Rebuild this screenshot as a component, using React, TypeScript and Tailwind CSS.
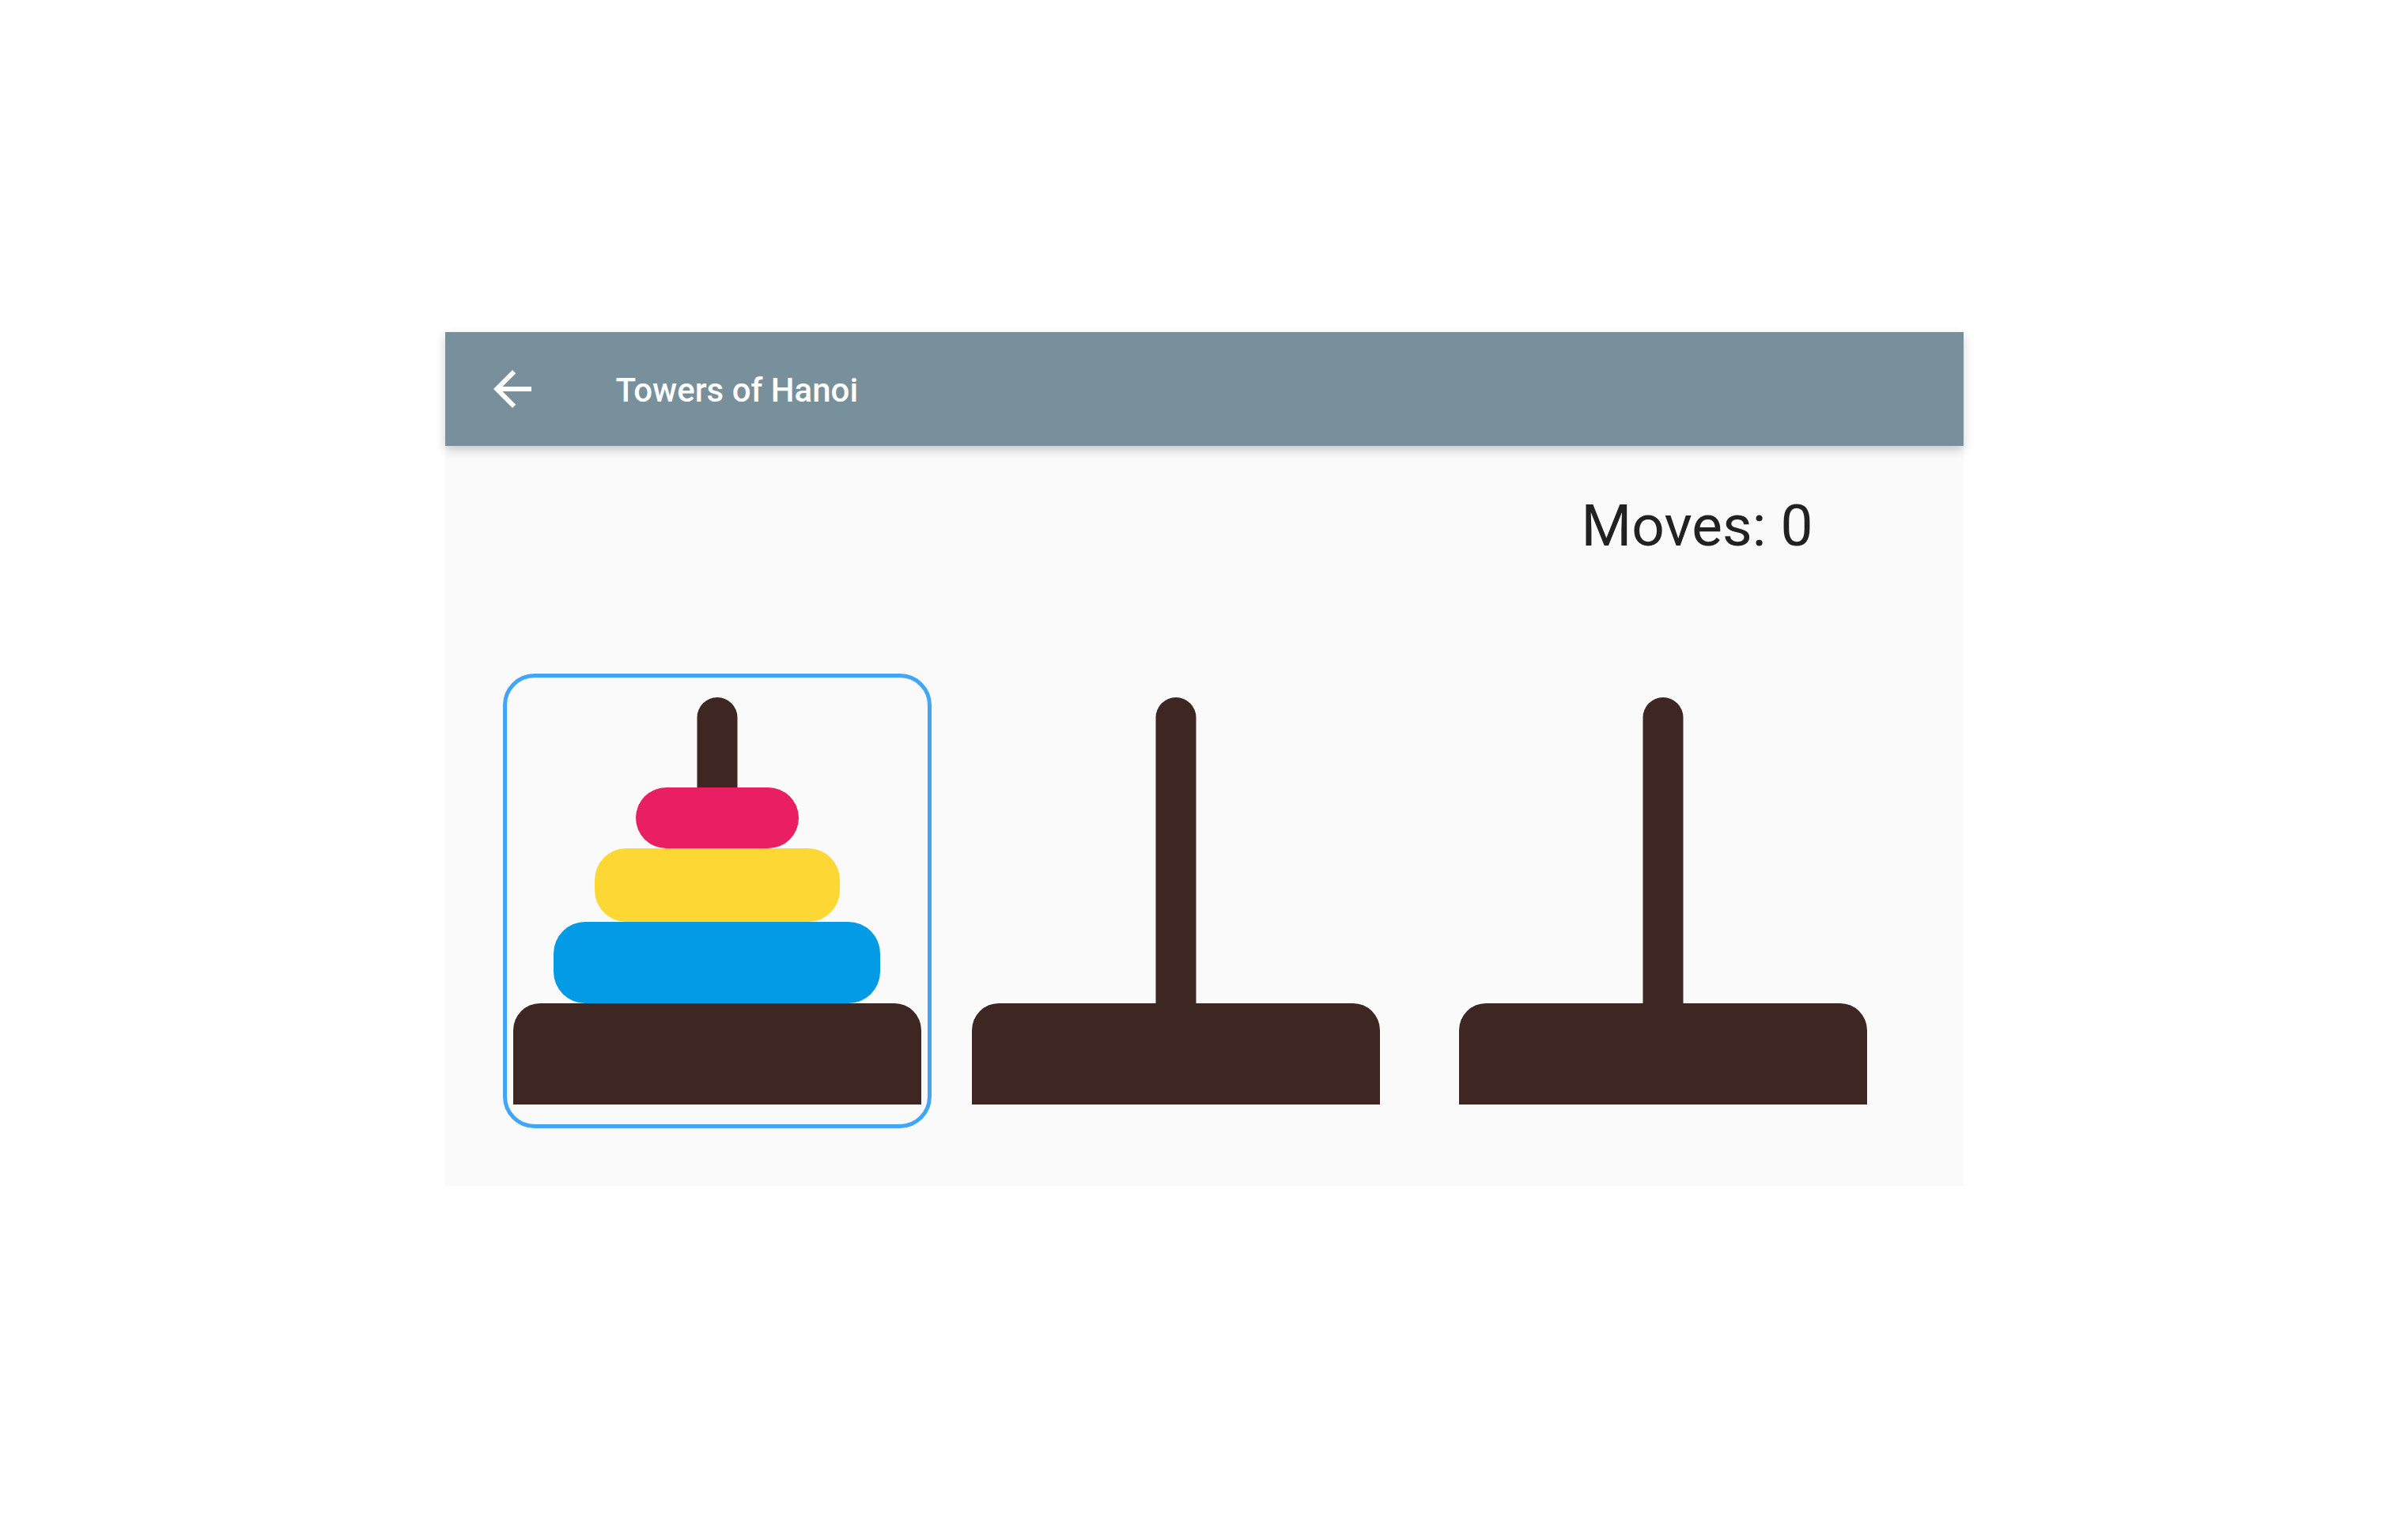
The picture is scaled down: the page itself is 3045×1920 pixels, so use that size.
import React from 'react';

type Disk = { width: number; height: number; color: string };

const disks: Disk[][] = [
  [
    { width: 206, height: 77, color: 'bg-[#e91e63]' },
    { width: 310, height: 93, color: 'bg-[#fdd835]' },
    { width: 413, height: 103, color: 'bg-[#039be5]' },
  ],
  [],
  [],
];

function Tower({ items, selected, className }: { items: Disk[]; selected: boolean; className?: string }) {
  return (
    <div
      className={`w-[542px] h-[575px] box-border border-[5px] rounded-[40px] px-[8px] py-[25px] flex flex-col items-center ${
        selected ? 'border-[#42a5f5]' : 'border-transparent'
      } ${className ?? ''}`}
    >
      {/* pole + disks */}
      <div className="relative flex-1 w-full flex flex-col items-center justify-end">
        <div className="absolute top-0 bottom-0 left-1/2 -translate-x-1/2 w-[51px] rounded-t-full bg-[#3e2723]" />
        {items.map((d, i) => (
          <div
            key={i}
            className={`relative rounded-[40px] ${d.color}`}
            style={{ width: d.width, height: d.height }}
          />
        ))}
      </div>
      {/* base */}
      <div className="w-[516px] h-[128px] rounded-t-[34px] bg-[#3e2723]" />
    </div>
  );
}

export default function App() {
  return (
    <div className="min-h-screen w-full bg-white flex items-center justify-center" style={{ fontFamily: 'Roboto, "Noto Sans", sans-serif' }}>
      <div className="w-[1920px] h-[1080px] bg-[#fafafa] flex flex-col">
        {/* App bar */}
        <div className="relative z-10 h-[144px] bg-[#78909c] flex items-center shadow-[0_5px_12px_rgba(0,0,0,0.2)]">
          <button className="ml-[49px] w-[72px] h-[72px] flex items-center justify-center text-white">
            <svg viewBox="0 0 24 24" className="w-[72px] h-[72px]" fill="currentColor">
              <path d="M20 11H7.83l5.59-5.59L12 4l-8 8 8 8 1.41-1.41L7.83 13H20v-2z" />
            </svg>
          </button>
          <h1 className="ml-[95px] mt-[4px] text-[42px] leading-[42px] font-medium text-white">Towers of Hanoi</h1>
        </div>

        {/* Moves */}
        <div className="flex justify-end pr-[190px] mt-[65px]">
          <p className="text-[73px] leading-[73px] text-[#212121]">Moves: 0</p>
        </div>

        {/* Towers */}
        <div className="flex pl-[73px] mt-[150px]">
          <Tower items={disks[0]} selected />
          <Tower items={disks[1]} selected={false} className="ml-[38px]" />
          <Tower items={disks[2]} selected={false} className="ml-[74px]" />
        </div>
      </div>
    </div>
  );
}
